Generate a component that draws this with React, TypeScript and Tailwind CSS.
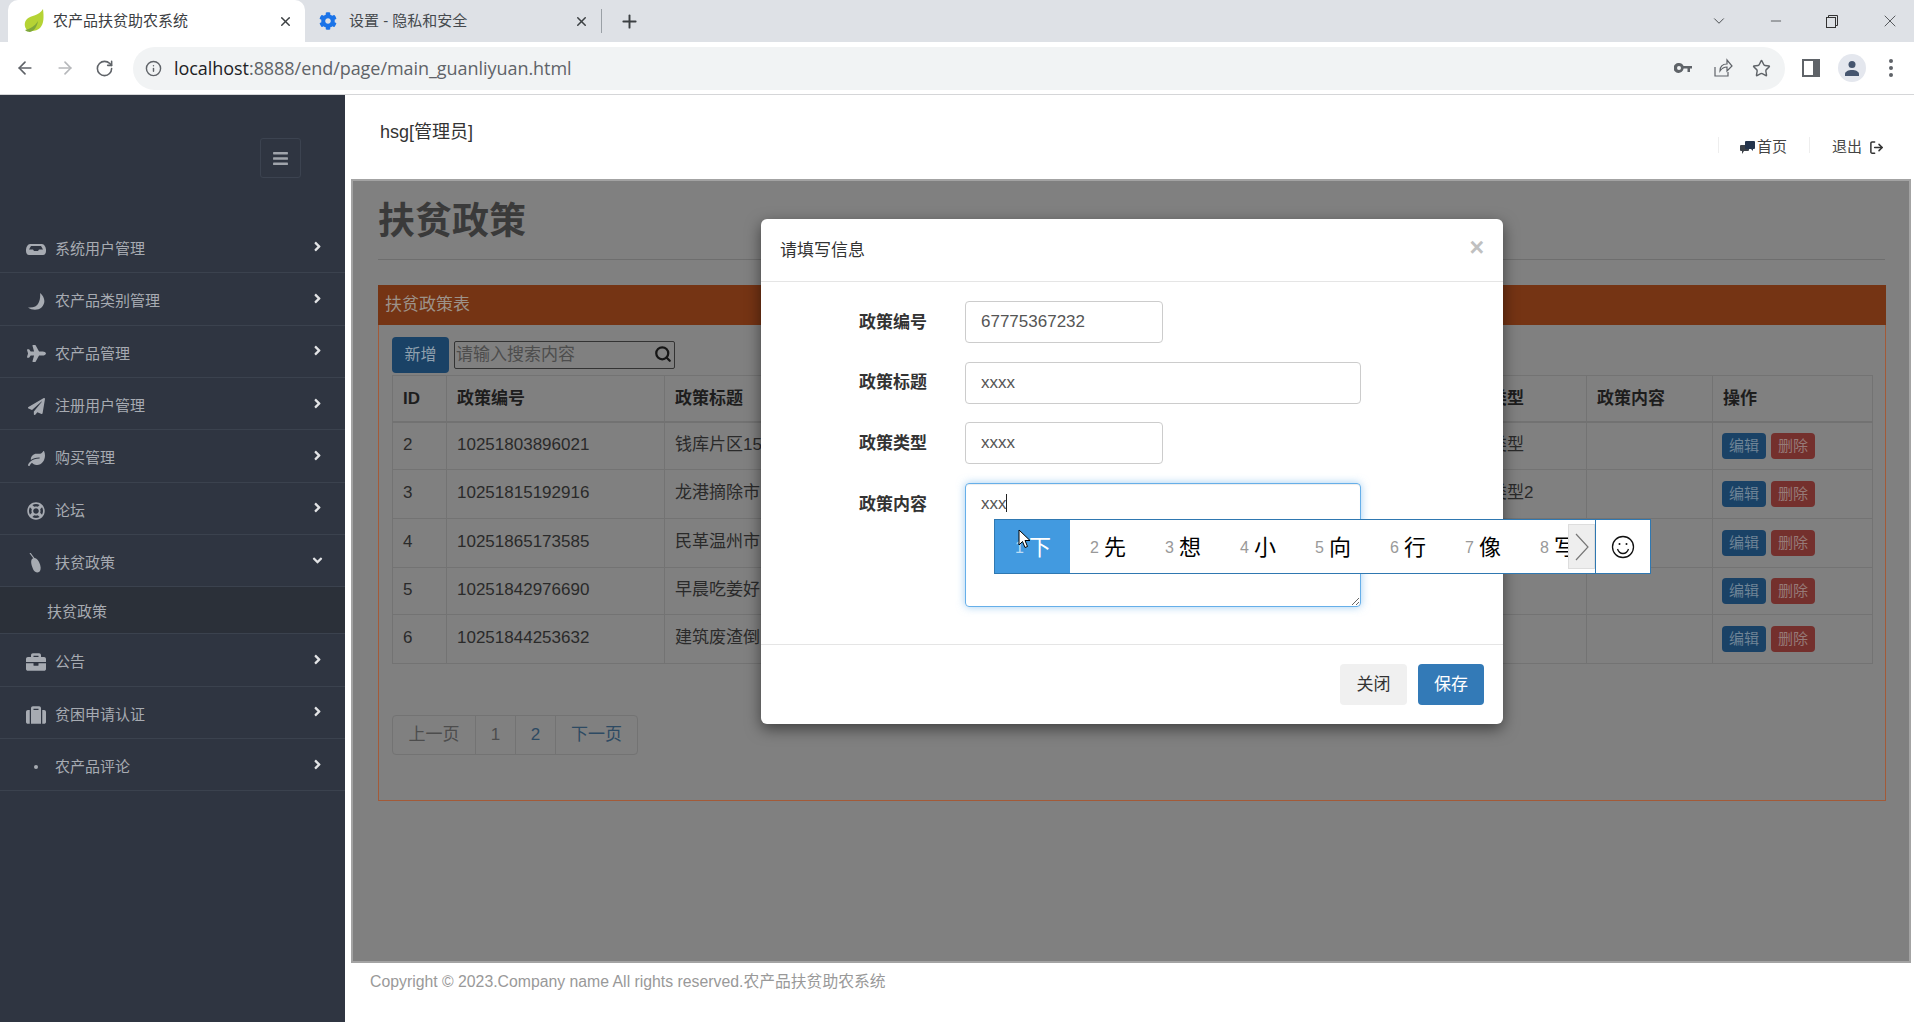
import type { ReactNode } from 'react'
import { ArrowLeft, ArrowRight, RotateCw, Info, Star, X, Plus, ChevronDown, Minus, LogOut, Search } from 'lucide-react'
import {
  FaAngleRight,
  FaAngleDown,
  FaBars,
  FaBriefcase,
  FaCog,
  FaLeaf,
  FaPaperPlane,
  FaPlane,
  FaRegLifeRing,
  FaSuitcase
} from 'react-icons/fa'

const MENU: { label: string; icon: ReactNode; open?: boolean; sub?: string }[] = [
  { label: '系统用户管理', icon: <InboxIcon /> },
  { label: '农产品类别管理', icon: <MoonIcon /> },
  { label: '农产品管理', icon: <FaPlane size={19} /> },
  { label: '注册用户管理', icon: <FaPaperPlane size={17} /> },
  { label: '购买管理', icon: <FaLeaf size={17} /> },
  { label: '论坛', icon: <FaRegLifeRing size={18} /> },
  { label: '扶贫政策', icon: <TagIcon />, open: true, sub: '扶贫政策' },
  { label: '公告', icon: <FaBriefcase size={20} /> },
  { label: '贫困申请认证', icon: <FaSuitcase size={20} /> },
  { label: '农产品评论', icon: <span className="h-[4px] w-[4px] rounded-full bg-[#a7abb2]" /> }
]

const ROWS = [
  { id: 2, no: '10251803896021', title: '钱库片区15', type: '政策类型', h: 'h-[48px]' },
  { id: 3, no: '10251815192916', title: '龙港摘除市', type: '政策类型2', h: 'h-[49px]' },
  { id: 4, no: '10251865173585', title: '民革温州市', type: '', h: 'h-[49px]' },
  { id: 5, no: '10251842976690', title: '早晨吃姜好', type: '', h: 'h-[47px]' },
  { id: 6, no: '10251844253632', title: '建筑废渣倒', type: '', h: 'h-[49px]' }
]

const CANDIDATES = ['先', '想', '小', '向', '行', '像', '写']

function InboxIcon() {
  return (
    <svg width="20" height="11" viewBox="0 0 20 11">
      <path d="M4 0h12c2 0 4 3 4 6v1c0 2-1 4-3 4H3c-2 0-3-2-3-4V6c0-3 2-6 4-6z" fill="#a7abb2" />
      <path d="M5 2h10l2 3.500h-4l-1 1.500H8L7 5.500H3z" fill="#2f3541" />
    </svg>
  )
}

function MoonIcon() {
  return (
    <svg width="17" height="17" viewBox="0 0 17 17">
      <path d="M12 0c5 4 6 10 1.500 14.500-3.500 3-9.500 3-13.500 0 5 .5 9-1 10.500-4.500C12 7 12.500 3 12 0z" fill="#a7abb2" />
    </svg>
  )
}

function TagIcon() {
  return (
    <svg width="14" height="20" viewBox="0 0 14 20">
      <path d="M1 0l4.500 6" stroke="#a7abb2" strokeWidth="1.200" fill="none" />
      <path d="M3 6c2-2 5-1 7 3s2 7 1 9-5 2-6.500-1S1 8 3 6z" fill="#a7abb2" />
    </svg>
  )
}

function LeafLogo() {
  return (
    <svg width="22" height="26" viewBox="0 0 22 26">
      <path d="M20 1c1 8 1 15-3 19-3 3-9 4-13 2C1 19 1 14 4 11c4-4 12-3 16-10z" fill="#b5d334" />
      <path d="M2 22c5-1 10-4 13-9-1 6-4 10-8 11-2 0-4-1-5-2z" fill="#7fa83a" />
    </svg>
  )
}

function HomeBubbles() {
  return (
    <svg width="15" height="13" viewBox="0 0 15 13">
      <path d="M1 4h7a1 1 0 0 1 1 1v4a1 1 0 0 1-1 1H4l-2 3v-3H1a1 1 0 0 1-1-1V5a1 1 0 0 1 1-1z" fill="#3c4148" />
      <path d="M6 0h8a1 1 0 0 1 1 1v6a1 1 0 0 1-1 1h-1v2l-2-2H6a1 1 0 0 1-1-1V1a1 1 0 0 1 1-1z" fill="#24344c" />
    </svg>
  )
}

function Tab({ title, icon, active }: { title: string; icon: ReactNode; active?: boolean }) {
  return (
    <div
      className={`relative flex h-[42px] w-[297px] items-center rounded-t-[10px] pl-[15px] pr-[12px] text-[15px] ${
        active ? 'bg-white text-[#3c4043]' : 'text-[#45494d]'
      }`}
    >
      <span className="flex w-[30px] shrink-0 items-center">{icon}</span>
      <span className="flex-1 truncate">{title}</span>
      <X size={15} strokeWidth={2.4} className="text-[#3c4043]" />
    </div>
  )
}

function BrowserChrome() {
  return (
    <div className="h-[95px] shrink-0 border-b border-[#d5d6d8] bg-white">
      <div className="flex h-[42px] items-center bg-[#dee1e6] pl-[8px] text-[#3c4043]">
        <Tab title="农产品扶贫助农系统" icon={<LeafLogo />} active />
        <div className="-ml-[1px]">
          <Tab title="设置 - 隐私和安全" icon={<FaCog size={18} className="text-[#1a73e8]" />} />
        </div>
        <span className="h-[24px] w-px bg-[#9aa0a6]" />
        <Plus size={21} strokeWidth={2.2} className="ml-[17px] text-[#3c4043]" />
        <ChevronDown size={18} strokeWidth={1.2} className="ml-auto text-[#3c4043]" />
        <Minus size={16} strokeWidth={1.2} className="ml-[40px]" />
        <svg width="12" height="13" viewBox="0 0 12 13" className="ml-[42px]" fill="none" stroke="#333">
          <rect x="0.5" y="2.5" width="9" height="10" />
          <path d="M2.5 2.5v-2h9v10h-2" />
        </svg>
        <X size={20} strokeWidth={1} className="ml-[42px] mr-[14px]" />
      </div>
      <div className="flex h-[52px] items-center pl-[15px] text-[#5f6368]">
        <ArrowLeft size={20} strokeWidth={2} />
        <ArrowRight size={20} strokeWidth={2} className="ml-[20px] text-[#b6b8bb]" />
        <RotateCw size={19} strokeWidth={2} className="ml-[20px]" />
        <div className="ml-[19px] flex h-[43px] w-[1652px] items-center rounded-full bg-[#f1f3f4] pl-[12px]">
          <Info size={17} strokeWidth={2} />
          <span className="ml-[12px] font-['Open_Sans','Liberation_Sans',sans-serif] text-[18px] tracking-[-0.05px]">
            <span className="text-[#202124]">localhost</span>:8888/end/page/main_guanliyuan.html
          </span>
          <svg width="18" height="10" viewBox="0 0 18 10" className="ml-auto" fill="#5f6368">
            <path d="M5 0a5 5 0 0 1 4.600 3H18v2.500h-2V9h-2.500V5.500H9.600A5 5 0 1 1 5 0zm0 3a2 2 0 1 0 0 4 2 2 0 0 0 0-4z" />
          </svg>
          <svg width="20" height="20" viewBox="0 0 20 20" className="ml-[21px]" fill="none" stroke="#5f6368" strokeWidth="1.2">
            <path d="M2 9v9h13v-4" />
            <path d="M7 13c0-5 3-7 7-7V2l5 6-5 5V9c-3 0-5 1-7 4z" />
          </svg>
          <Star size={19} strokeWidth={1.8} className="ml-[19px] mr-[14px]" />
        </div>
        <svg width="18" height="18" viewBox="0 0 18 18" className="ml-[17px]">
          <rect width="18" height="18" fill="#5f6368" />
          <rect x="2" y="2" width="9" height="14" fill="#fff" />
        </svg>
        <span className="ml-[18px] flex h-[28px] w-[28px] items-center justify-center rounded-full bg-[#e4e7ee]">
          <svg width="16" height="16" viewBox="0 0 16 16" fill="#45556f">
            <circle cx="8" cy="4.500" r="3.500" />
            <path d="M1 16v-2c0-2.500 3.500-4 7-4s7 1.500 7 4v2z" />
          </svg>
        </span>
        <span className="ml-[23px] flex flex-col gap-[3px]">
          <i className="h-[4px] w-[4px] rounded-full bg-[#5f6368]" />
          <i className="h-[4px] w-[4px] rounded-full bg-[#5f6368]" />
          <i className="h-[4px] w-[4px] rounded-full bg-[#5f6368]" />
        </span>
      </div>
    </div>
  )
}

function Sidebar() {
  return (
    <aside className="w-[345px] shrink-0 bg-[#2f3541] text-[15px] text-[#a7abb2]">
      <div className="h-[126px] pl-[260px] pt-[43px]">
        <div className="flex h-[40px] w-[41px] items-center justify-center rounded-[3px] border border-[#3c4350] text-[#a0a4ab]">
          <FaBars size={17} />
        </div>
      </div>
      {MENU.map((m) => (
        <div key={m.label}>
          <div className="flex h-[52.33px] items-center border-b border-[#3b424e] pl-[26px] pr-[20px] pt-[5px]">
            <span className="flex w-[20px] justify-center">{m.icon}</span>
            <span className="ml-[9px]">{m.label}</span>
            {m.open ? (
              <FaAngleDown size={15} className="ml-auto -translate-y-[3px] text-[#e2e3e5]" />
            ) : (
              <FaAngleRight size={15} className="ml-auto -translate-y-[3px] text-[#e2e3e5]" />
            )}
          </div>
          {m.sub && (
            <div className="flex h-[47px] items-center border-b border-[#3b424e] bg-[#2b3039] pl-[47px] pt-[3px]">{m.sub}</div>
          )}
        </div>
      ))}
    </aside>
  )
}

function TopBar() {
  return (
    <div className="flex h-[84px] shrink-0 text-[#444]">
      <div className="pl-[35px] pt-[26px] text-[18px] leading-[22px] text-[#333]">hsg[管理员]</div>
      <div className="ml-auto flex items-start pt-[41px] text-[15px] leading-[22px]">
        <span className="mt-[1px] h-[16px] w-px bg-[#eeeeee]" />
        <span className="ml-[21px] flex items-center gap-[2px]">
          <HomeBubbles />
          首页
        </span>
        <span className="ml-[22px] mt-[1px] h-[16px] w-px bg-[#eeeeee]" />
        <span className="ml-[22px] flex items-center gap-[7px]">
          退出
          <LogOut size={15} strokeWidth={2.4} className="text-[#333]" />
        </span>
        <span className="w-[30px]" />
      </div>
    </div>
  )
}

function PolicyPanel() {
  return (
    <div className="mt-[25px] mr-[23px] border border-[#a35a38]">
      <div className="-m-px flex h-[40px] items-center bg-[#753414] pl-[7px] text-[17px] text-[#9d9289]">扶贫政策表</div>
      <div className="px-[13px] pb-[45px] pt-[13px]">
        <div className="flex h-[36px] items-center gap-[5px]">
          <span className="flex h-[36px] w-[57px] items-center justify-center rounded-[4px] bg-[#1a4266] text-[16px] text-[#8fa0ae]">
            新增
          </span>
          <div className="relative h-[28px] w-[221px] rounded-[2px] border border-[#333]">
            <input
              readOnly
              placeholder="请输入搜索内容"
              className="h-full w-full bg-transparent pl-[1px] text-[17px] outline-none placeholder:text-[#4d4d4d]"
            />
            <Search size={18} strokeWidth={3} className="absolute right-[2px] top-[3px] text-[#151515]" />
          </div>
        </div>
        <table className="mt-[2px] w-[1480px] table-fixed border-collapse text-[17px] text-[#2a2a2a]">
          <colgroup>
            <col className="w-[54px]" />
            <col className="w-[218px]" />
            <col className="w-[781px]" />
            <col className="w-[141px]" />
            <col className="w-[126px]" />
            <col className="w-[160px]" />
          </colgroup>
          <thead>
            <tr className="h-[46px] border-b-2 border-[#727272] text-left font-bold text-[#1d1d1d]">
              {['ID', '政策编号', '政策标题', '政策类型', '政策内容', '操作'].map((h) => (
                <th key={h} className="border border-[#737373] px-[10px] font-bold">
                  {h}
                </th>
              ))}
            </tr>
          </thead>
          <tbody>
            {ROWS.map((r) => (
              <tr key={r.id} className={r.h}>
                <td className="border border-[#737373] px-[10px] pb-[2px]">{r.id}</td>
                <td className="border border-[#737373] px-[10px] pb-[2px]">{r.no}</td>
                <td className="border border-[#737373] px-[10px] pb-[2px]">{r.title}</td>
                <td className="border border-[#737373] px-[10px] pb-[2px]">{r.type}</td>
                <td className="border border-[#737373]" />
                <td className="border border-[#737373] px-[9px]">
                  <div className="flex gap-[5px] text-[15px]">
                    <span className="flex h-[26px] w-[44px] items-center justify-center rounded-[4px] bg-[#1a4266] text-[#6f8496]">
                      编辑
                    </span>
                    <span className="flex h-[26px] w-[44px] items-center justify-center rounded-[4px] bg-[#74302d] text-[#967a78]">
                      删除
                    </span>
                  </div>
                </td>
              </tr>
            ))}
          </tbody>
        </table>
        <div className="mt-[51px] flex h-[40px] w-[246px] rounded-[4px] border border-[#737373] text-[17px]">
          <span className="flex w-[83px] items-center justify-center border-r border-[#737373] text-[#4d4d4d]">上一页</span>
          <span className="flex w-[40px] items-center justify-center border-r border-[#737373] text-[#4d4d4d]">1</span>
          <span className="flex w-[40px] items-center justify-center border-r border-[#737373] text-[#2d4a63]">2</span>
          <span className="flex flex-1 items-center justify-center text-[#2d4a63]">下一页</span>
        </div>
      </div>
    </div>
  )
}

function Field({ label, children }: { label: string; children: ReactNode }) {
  return (
    <div className="flex">
      <label className="flex h-[42px] w-[166px] items-center justify-end pt-[1px] text-[17px] font-bold text-[#333]">{label}</label>
      <div className="ml-[38px]">{children}</div>
    </div>
  )
}

function TextInput({ value, wide }: { value: string; wide?: boolean }) {
  return (
    <input
      readOnly
      value={value}
      className={`block h-[42px] rounded-[4px] border border-[#cccccc] bg-white px-[15px] text-[17px] text-[#555] outline-none ${
        wide ? 'w-[396px]' : 'w-[198px]'
      }`}
    />
  )
}

function EditModal() {
  return (
    <div className="absolute left-[408px] top-[38px] flex h-[505px] w-[742px] flex-col rounded-[6px] bg-white shadow-[0_5px_15px_rgba(0,0,0,0.5)]">
      <div className="flex h-[63px] shrink-0 items-center border-b border-[#e5e5e5] pl-[19px] pr-[19px] pt-[1px] text-[17px] text-[#333]">
        <span>请填写信息</span>
        <span className="ml-auto -translate-y-[3px] text-[25px] font-bold leading-none text-[#c0c0c0]">×</span>
      </div>
      <div className="flex flex-1 flex-col gap-[18.67px] pt-[19px]">
        <Field label="政策编号">
          <TextInput value="67775367232" />
        </Field>
        <Field label="政策标题">
          <TextInput value="xxxx" wide />
        </Field>
        <Field label="政策类型">
          <TextInput value="xxxx" />
        </Field>
        <Field label="政策内容">
          <div className="relative h-[124px] w-[396px]">
            <textarea
              readOnly
              value="xxx"
              className="block h-[124px] w-[396px] rounded-[4px] border border-[#66afe9] px-[15px] py-[9px] text-[17px] leading-[21px] text-[#555] shadow-[inset_0_1px_1px_rgba(0,0,0,0.075),0_0_8px_rgba(102,175,233,0.6)] outline-none"
            />
            <span className="absolute left-[41px] top-[11px] h-[18px] w-px bg-[#222]" />
          </div>
        </Field>
      </div>
      <div className="flex h-[80px] shrink-0 justify-end gap-[11px] border-t border-[#e5e5e5] pr-[19px] pt-[19px] text-[17px]">
        <span className="flex h-[41px] w-[67px] items-center justify-center rounded-[4px] bg-[#f0f0f0] text-[#333]">关闭</span>
        <span className="flex h-[41px] w-[66px] items-center justify-center rounded-[4px] bg-[#337ab7] text-white">保存</span>
      </div>
    </div>
  )
}

function ImeBar() {
  return (
    <div className="absolute left-[641px] top-[338px] flex h-[55px] w-[657px] border border-[#2f78b1] bg-white text-[22px] leading-none text-black">
      <div className="relative flex w-[600px] overflow-hidden">
        <div className="flex w-[75px] shrink-0 items-center bg-[#429ae0] pl-[20px] pt-[2px] text-white">
          <span className="w-[14px] text-[16px] text-[#bcdcf5]">1</span>下
        </div>
        {CANDIDATES.map((c, i) => (
          <div key={c} className="flex w-[75px] shrink-0 items-center pl-[20px] pt-[2px]">
            <span className="w-[14px] text-[16px] text-[#999]">{i + 2}</span>
            {c}
          </div>
        ))}
        <div className="absolute right-0 top-[4px] flex h-[45px] w-[27px] items-center justify-center border border-[#dddddd] bg-[#eeeeee]">
          <svg width="14" height="28" viewBox="0 0 14 28" fill="none" stroke="#777" strokeWidth="1.200">
            <path d="M1 1l12 13L1 27" />
          </svg>
        </div>
      </div>
      <div className="flex flex-1 items-center justify-center border-l border-[#2f78b1]">
        <svg width="24" height="24" viewBox="0 0 24 24" fill="none" stroke="#111" strokeWidth="1.300">
          <circle cx="12" cy="12" r="10.500" />
          <path d="M6.500 14c1 3 3 4.500 5.500 4.500s4.500-1.500 5.500-4.500" />
          <circle cx="8.500" cy="9" r="1" fill="#111" stroke="none" />
          <circle cx="15.500" cy="9" r="1" fill="#111" stroke="none" />
        </svg>
      </div>
    </div>
  )
}

function MouseCursor() {
  return (
    <svg width="14" height="20" viewBox="0 0 14 20" className="absolute left-[665px] top-[348px]">
      <path d="M1 1v15l3.500-3.500 2.500 6 2.500-1-2.500-6H12z" fill="#fff" stroke="#000" strokeWidth="1" />
    </svg>
  )
}

export default function App() {
  return (
    <div className="flex h-[1022px] w-[1914px] flex-col overflow-hidden bg-white font-[family-name:'Liberation_Sans','Noto_Sans_CJK_SC',sans-serif]">
      <BrowserChrome />
      <div className="flex min-h-0 flex-1">
        <Sidebar />
        <main className="flex min-w-0 flex-1 flex-col">
          <TopBar />
          <div className="relative ml-[6px] mr-[3px] h-[784px] shrink-0 border-2 border-[#a3a3a3] bg-[#808080] pl-[25px] pt-[21px]">
            <h1 className="h-[40px] text-[37px] font-bold leading-[40px] text-[#3a3a3a]">扶贫政策</h1>
            <div className="mr-[24px] mt-[17px] border-t border-[#6e6e6e]" />
            <PolicyPanel />
            <EditModal />
            <ImeBar />
            <MouseCursor />
          </div>
          <div className="pl-[25px] pt-[7px] text-[15.8px] text-[#999]">Copyright © 2023.Company name All rights reserved.农产品扶贫助农系统</div>
        </main>
      </div>
    </div>
  )
}
